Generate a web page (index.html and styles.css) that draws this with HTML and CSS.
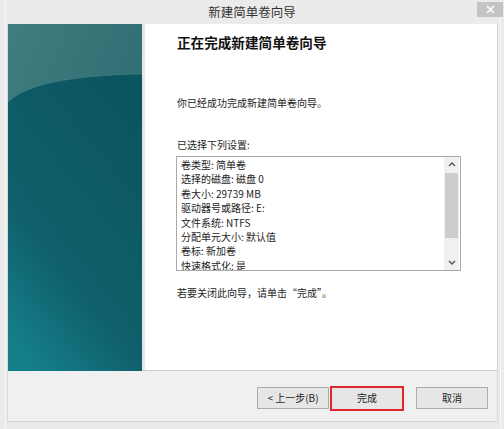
FILE: index.html
```html
<!DOCTYPE html>
<html lang="zh-CN">
<head>
<meta charset="utf-8">
<title>新建简单卷向导</title>
<link rel="stylesheet" href="styles.css">
</head>
<body>
<div class="window">
  <div class="titlebar">
    <span class="title">新建简单卷向导</span>
    <span class="close">
      <svg width="9" height="9" viewBox="0 0 9 9"><path d="M1 1 L8 8 M8 1 L1 8" stroke="#fff" stroke-width="1.6"/></svg>
    </span>
  </div>
  <div class="client">
    <div class="main">
      <div class="side">
        <svg width="134" height="347" viewBox="0 0 134 347">
          <defs>
            <linearGradient id="gTop" x1="0" y1="0" x2="1" y2="1">
              <stop offset="0" stop-color="#407d80"/>
              <stop offset="1" stop-color="#24646a"/>
            </linearGradient>
            <linearGradient id="gLow" x1="0.75" y1="0" x2="0.2" y2="1">
              <stop offset="0" stop-color="#0b5561"/>
              <stop offset="0.65" stop-color="#0f606c"/>
              <stop offset="1" stop-color="#157f8a"/>
            </linearGradient>
          </defs>
          <rect width="134" height="347" fill="url(#gTop)"/>
          <path d="M0 78 Q26 52 134 50 L134 347 L0 347 Z" fill="url(#gLow)"/>
          <path d="M0 78 Q26 52 134 50" fill="none" stroke="rgba(255,255,255,0.10)" stroke-width="1"/>
        </svg>
      </div>
      <div class="content">
        <h1 class="heading">正在完成新建简单卷向导</h1>
        <p class="text intro">你已经成功完成新建简单卷向导。</p>
        <p class="text label">已选择下列设置:</p>
        <div class="listbox">
          <div class="items">
            <div class="item">卷类型: 简单卷</div>
            <div class="item">选择的磁盘: 磁盘 0</div>
            <div class="item">卷大小: 29739 MB</div>
            <div class="item">驱动器号或路径: E:</div>
            <div class="item">文件系统: NTFS</div>
            <div class="item">分配单元大小: 默认值</div>
            <div class="item">卷标: 新加卷</div>
            <div class="item">快速格式化: 是</div>
          </div>
          <div class="scrollbar">
            <div class="arrow">
              <svg width="8" height="5" viewBox="0 0 8 5"><path d="M1 4 L4 1 L7 4" fill="none" stroke="#555" stroke-width="1.4"/></svg>
            </div>
            <div class="thumb"></div>
            <div class="track"></div>
            <div class="arrow">
              <svg width="8" height="5" viewBox="0 0 8 5"><path d="M1 1 L4 4 L7 1" fill="none" stroke="#555" stroke-width="1.4"/></svg>
            </div>
          </div>
        </div>
        <p class="text closing">若要关闭此向导，请单击“完成”。</p>
      </div>
    </div>
    <div class="footer">
      <button class="btn">&lt; 上一步(B)</button>
      <button class="btn primary">完成</button>
      <button class="btn cancel">取消</button>
    </div>
  </div>
</div>
</body>
</html>
```
FILE: styles.css
```css
* { box-sizing: border-box; }
html, body { margin: 0; padding: 0; }
body {
  width: 504px;
  height: 429px;
  background: #ebebeb;
  font-family: "Noto Sans CJK SC", "Noto Sans", sans-serif;
  color: #1e1e1e;
  overflow: hidden;
}
.window {
  height: 429px;
  border-left: 1px solid #f6f6f6;
  border-right: 1px solid #f6f6f6;
  margin-left: 5px;
  width: 496px;
}
.titlebar {
  position: relative;
  height: 24px;
  display: flex;
  align-items: center;
  justify-content: center;
  padding-right: 2px;
}
.title {
  font-size: 12.5px;
  line-height: 16px;
  color: #333;
  margin-top: -1px;
}
.close {
  position: absolute;
  right: -3px;
  top: 2px;
  width: 26px;
  height: 15px;
  background: #c4c4c4;
  display: flex;
  align-items: center;
  justify-content: center;
}
.client {
  margin-left: 1px;
  width: 491px;
  border-right: 1px solid #d8d8d8;
  border-left: 1px solid #dcdcdc;
}
.main {
  display: flex;
  height: 347px;
  border-bottom: 1px solid #cfcfcf;
}
.side {
  width: 134px;
  height: 347px;
  flex: none;
}
.side svg { display: block; }
.content {
  flex: 1;
  background: #fff;
  border-left: 3px solid #e4e6e6;
  padding-left: 32px;
  padding-top: 9px;
  display: flex;
  flex-direction: column;
  align-items: flex-start;
}
.heading {
  margin: 0;
  font-size: 13.6px;
  line-height: 18px;
  font-weight: bold;
  color: #111;
}
.text {
  margin: 0;
  font-size: 10px;
  line-height: 14px;
}
.intro { margin-top: 45px; }
.label { margin-top: 28px; }
.listbox {
  margin-top: 4px;
  width: 285px;
  height: 115px;
  flex: none;
  border: 1px solid #a9a9a9;
  display: grid;
  grid-template-columns: 1fr 15px;
  overflow: hidden;
  margin-left: -1px;
  padding-right: 1px;
}
.items {
  overflow: hidden;
  padding-left: 4px;
  padding-top: 1px;
  font-size: 10px;
  line-height: 14.4px;
}
.item { white-space: nowrap; }
.scrollbar {
  display: flex;
  flex-direction: column;
  background: #f0f0f0;
}
.arrow {
  height: 15px;
  flex: none;
  display: flex;
  align-items: center;
  justify-content: center;
}
.thumb {
  height: 65px;
  flex: none;
  background: #cdcdcd;
  margin: 1px 1px 0 1px;
}
.track { flex: 1; }
.closing { margin-top: 15px; }
.footer {
  height: 51px;
  background: #f0f0f0;
  border-bottom: 1px solid #d3d3d3;
  display: flex;
  align-items: center;
  justify-content: flex-end;
  padding-right: 9px;
  padding-top: 4px;
}
.btn {
  width: 72px;
  height: 22px;
  border: 1px solid #adadad;
  background: #e6e6e6;
  font-family: "Noto Sans CJK SC", "Noto Sans", sans-serif;
  font-size: 10px;
  line-height: 14px;
  color: #1e1e1e;
  padding: 0;
  margin: 0;
}
.primary {
  width: 74px;
  height: 25px;
  border: 2px solid #e0262a;
  margin-left: 1px;
}
.cancel { margin-left: 12px; }
```
